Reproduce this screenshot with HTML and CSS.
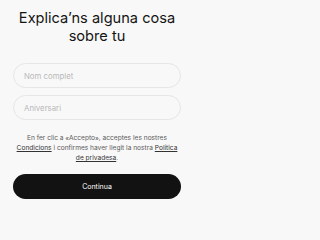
FILE: index.html
```html
<!DOCTYPE html>
<html lang="ca">
<head>
<meta charset="utf-8">
<link rel="stylesheet" href="styles.css">
</head>
<body>
<main class="screen">
  <h1 class="title">Explica’ns alguna cosa<br>sobre tu</h1>
  <div class="fields">
    <div class="field">Nom complet</div>
    <div class="field">Aniversari</div>
  </div>
  <p class="legal">En fer clic a «Accepto», acceptes les nostres<br><a>Condicions</a> i confirmes haver llegit la nostra <a>Política</a><br><a>de privadesa</a>.</p>
  <button class="btn">Continua</button>
</main>
</body>
</html>
```
FILE: styles.css
```css
html, body {
  margin: 0;
  padding: 0;
  background: #f8f8f8;
}
body {
  width: 201px;
  height: 211px;
  overflow: hidden;
  font-family: Inter, "Noto Sans", sans-serif;
}
.screen {
  display: flex;
  flex-direction: column;
  padding: 9px 20px 0 13px;
}
.title {
  margin: 0;
  font-size: 14.6px;
  line-height: 18px;
  font-weight: 400;
  color: #141414;
  text-align: center;
  white-space: nowrap;
}
.fields {
  display: flex;
  flex-direction: column;
  gap: 7px;
  margin-top: 18px;
}
.field {
  height: 25px;
  box-sizing: border-box;
  border: 1px solid #e6e6e6;
  border-radius: 13px;
  padding: 0 10px;
  display: flex;
  align-items: center;
  font-size: 7.8px;
  color: #b8b8b8;
  background: #f8f8f8;
}
.legal {
  margin: 13px 0 0;
  font-size: 6.6px;
  line-height: 10px;
  color: #5a5a5a;
  text-align: center;
  white-space: nowrap;
}
.legal a {
  color: #333;
  text-decoration: underline;
}
.btn {
  margin-top: 11px;
  height: 25px;
  border: none;
  border-radius: 13px;
  background: #121212;
  color: #ffffff;
  font-family: Inter, "Noto Sans", sans-serif;
  font-size: 7px;
  padding: 0;
}
```
